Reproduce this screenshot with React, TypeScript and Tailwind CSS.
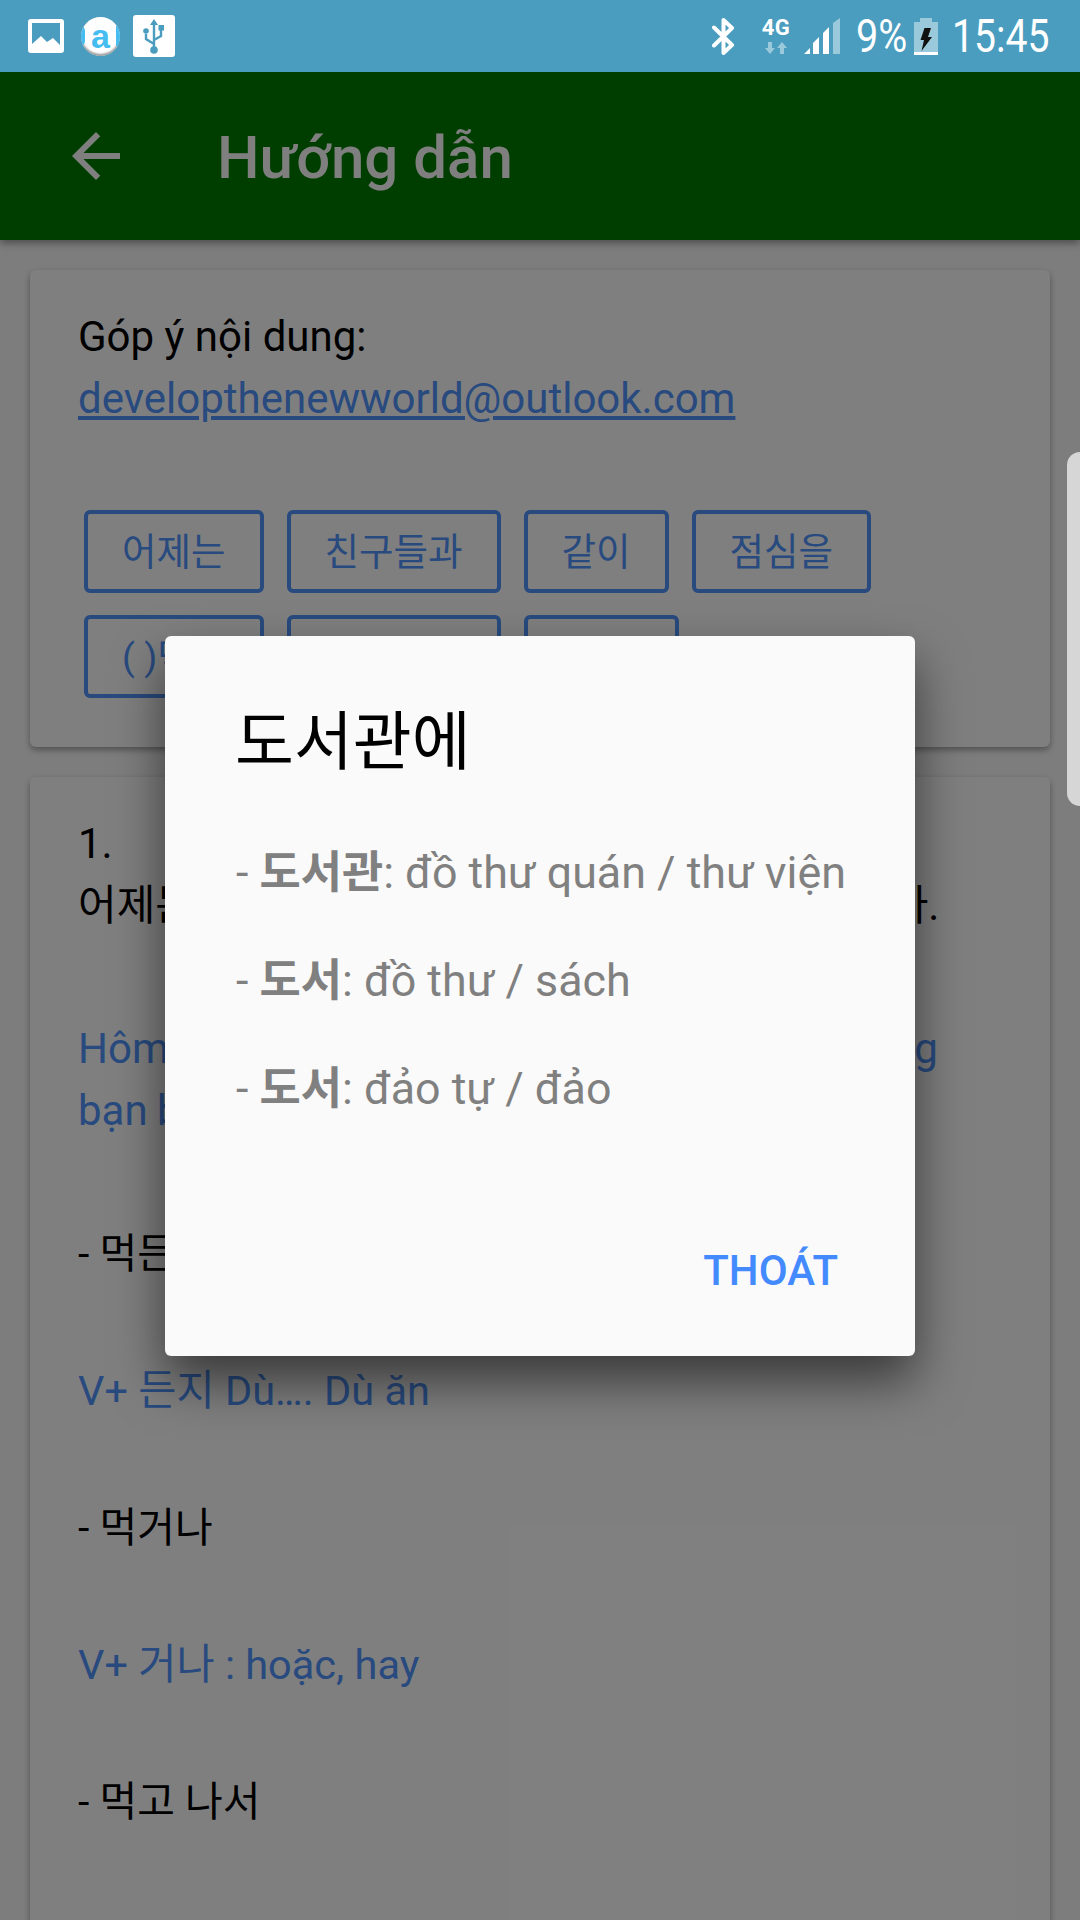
const sans = "font-['Roboto','Noto_Sans_CJK_KR',sans-serif]";

function ImageIcon() {
  return (
    <svg viewBox="0 0 36 34" className="h-[34px] w-[36px]">
      <rect width="36" height="34" rx="3" fill="#fff" />
      <path d="M4 4h28v22l-7-7-6 4-6-6-9 8z" fill="#4a9dbf" />
    </svg>
  );
}

function AppIcon() {
  return (
    <div className="relative flex h-[39px] w-[39px] items-center justify-center overflow-hidden rounded-full bg-white shadow-[inset_0_-2px_2px_#9a9a9a]">
      <span className="font-['Liberation_Sans',sans-serif] text-[34px] leading-none font-bold text-[#45bdf0]">a</span>
      <span className="absolute top-[8px] left-[-2px] h-[22px] w-[6px] rounded-r-full bg-[#45bdf0]" />
      <span className="absolute top-[9px] right-0 h-[20px] w-[4px] bg-[#45bdf0]" />
    </div>
  );
}

function UsbIcon() {
  return (
    <svg viewBox="0 0 42 42" className="h-[42px] w-[42px]">
      <rect width="42" height="42" rx="3" fill="#fff" />
      <g fill="#4a9dbf" stroke="#4a9dbf">
        <path d="M21 8v27M21 29l-8-5v-5M21 25l7-4v-6" fill="none" strokeWidth="2.4" />
        <path d="M21 4l4 6h-8z" strokeWidth="0" />
        <circle cx="13" cy="16" r="2.8" strokeWidth="0" />
        <rect x="25.5" y="10" width="5.5" height="5.5" strokeWidth="0" />
        <circle cx="21" cy="35" r="3.8" strokeWidth="0" />
      </g>
    </svg>
  );
}

function Bluetooth() {
  return (
    <svg viewBox="0 0 23 37" className="h-[37px] w-[23px]">
      <path d="M2 9.5l18 17.5-8.5 8V2l8.5 8L2 27.5" fill="none" stroke="#fff" strokeWidth="4" strokeLinejoin="round" strokeLinecap="round" />
    </svg>
  );
}

function NetworkType() {
  return (
    <div className="flex w-[28px] flex-col items-center">
      <span className="font-['Roboto',sans-serif] text-[22px] leading-[18px] font-bold tracking-[0.5px] whitespace-nowrap text-white">4G</span>
      <svg viewBox="0 0 22 12" className="mt-[5px] h-[12px] w-[22px]">
        <path d="M3 0h4v6h3l-5 6-5-6h3zM15 12h4V6h3l-5-6-5 6h3z" fill="#fff" opacity="0.45" />
      </svg>
    </div>
  );
}

function Signal() {
  return (
    <svg viewBox="0 0 36 36" className="h-[36px] w-[36px]">
      <path d="M0 36l6-6v6zM9 36V25l6-6v17zM19 36V15l6-6v27z" fill="#fff" />
      <path d="M29 36V5l7-5v36z" fill="#fff" opacity="0.45" />
    </svg>
  );
}

function Battery() {
  return (
    <svg viewBox="0 0 24 37" className="h-[37px] w-[24px]">
      <path d="M6 0h12v4h6v33H0V4h6z" fill="#fff" opacity="0.45" />
      <rect y="34" width="24" height="3" fill="#fff" />
      <path d="M10.5 10h6.5l-3 9h4L7.5 33l2.5-11H6.5z" fill="#111" />
    </svg>
  );
}

function BackArrow() {
  return (
    <svg viewBox="0 0 24 24" className="h-[72px] w-[72px]" fill="#fff">
      <path d="M20 11H7.83l5.59-5.59L12 4l-8 8 8 8 1.41-1.41L7.83 13H20v-2z" />
    </svg>
  );
}

function StatusBar() {
  return (
    <div className="relative z-20 flex h-[72px] items-center justify-between bg-[#4a9dbf] pr-[32px] pl-[28px]">
      <div className="flex items-center gap-[13px]">
        <ImageIcon />
        <div className="ml-[4px]">
          <AppIcon />
        </div>
        <UsbIcon />
      </div>
      <div className={`flex items-center text-white ${sans}`}>
        <Bluetooth />
        <div className="ml-[27px]">
          <NetworkType />
        </div>
        <div className="ml-[14px]">
          <Signal />
        </div>
        <span className="ml-[16px] w-[48px] origin-left scale-x-[0.86] text-[46px] leading-none whitespace-nowrap">9%</span>
        <div className="ml-[10px]">
          <Battery />
        </div>
        <span className="ml-[14px] w-[96px] origin-left scale-x-[0.85] text-[46px] leading-none whitespace-nowrap">15:45</span>
      </div>
    </div>
  );
}

function WordButton({ label }: { label: string }) {
  return (
    <div className="flex h-[83px] items-center rounded-[6px] border-[4px] border-[#5094fc] px-[34px] text-[37.5px] whitespace-nowrap text-[#5094fc]">
      {label}
    </div>
  );
}

function Card({ children }: { children: React.ReactNode }) {
  return <div className="rounded-[6px] bg-white shadow-[0_3px_6px_rgba(0,0,0,0.35)]">{children}</div>;
}

function Line({ children, blue, className = "" }: { children: React.ReactNode; blue?: boolean; className?: string }) {
  return <p className={`whitespace-nowrap ${blue ? "text-[#5094fc]" : "text-black"} ${className}`}>{children}</p>;
}

function DialogRow({ word, text }: { word: string; text: string }) {
  return (
    <p className="h-[108px] whitespace-nowrap">
      - <b className="font-bold">{word}</b>: {text}
    </p>
  );
}

function Dialog() {
  return (
    <div className="flex h-[720px] w-[750px] flex-col rounded-[6px] bg-[#fafafa] pt-[72px] pr-[77px] pl-[70px] shadow-[0_25px_50px_rgba(0,0,0,0.55)]">
      <h2 className="text-[64px] leading-[70px] font-normal text-black">도서관에</h2>
      <div className="mt-[41px] pl-[1px] text-[44.8px] leading-[108px] text-[#808080]">
        <DialogRow word="도서관" text="đồ thư quán / thư viện" />
        <DialogRow word="도서" text="đồ thư / sách" />
        <DialogRow word="도서" text="đảo tự / đảo" />
      </div>
      <div className="mt-[98px] text-right text-[42px] leading-[60px] font-medium text-[#448aff]">THOÁT</div>
    </div>
  );
}

export default function App() {
  return (
    <div className={`relative h-[1920px] w-[1080px] overflow-hidden bg-[#fafafa] ${sans}`}>
      <StatusBar />

      <header className="relative flex h-[168px] items-center bg-[#007c00] pl-[60px] text-white shadow-[0_3px_8px_rgba(0,0,0,0.4)]">
        <BackArrow />
        <h1 className="mt-[3px] ml-[85px] text-[60px] font-medium">Hướng dẫn</h1>
      </header>

      <main className="flex flex-col gap-[30px] px-[30px] pt-[30px] text-[42px] leading-[62px]">
        <Card>
          <div className="h-[477px] px-[48px] pt-[36px]">
            <p className="text-black">Góp ý nội dung:</p>
            <a className="text-[#5094fc] underline">developthenewworld@outlook.com</a>
            <div className="mt-[80px] flex flex-wrap gap-x-[23px] gap-y-[22px] pl-[6px]">
              <WordButton label="어제는" />
              <WordButton label="친구들과" />
              <WordButton label="같이" />
              <WordButton label="점심을" />
              <WordButton label="( )먹고" />
              <WordButton label="도서관에" />
              <WordButton label="갔다." />
            </div>
          </div>
        </Card>
        <Card>
          <div className="flex h-[1200px] flex-col gap-[75px] px-[48px] pt-[36px]">
            <Line className="mb-[6px] [word-spacing:2.5px]">
              1.
              <br />
              어제는 친구들과 같이 점심을 먹고 도서관에 갔다.
            </Line>
            <Line blue className="mb-[6px] [word-spacing:-1px]">
              Hôm qua sau khi ăn trưa xong mình đã đi cùng
              <br />
              bạn bè đến thư viện.
            </Line>
            <Line className="text-[41px]">- 먹든지</Line>
            <Line blue className="text-[41.5px]">V+ 든지 Dù…. Dù ăn</Line>
            <Line className="text-[41px]">- 먹거나</Line>
            <Line blue className="text-[41.5px]">V+ 거나 : hoặc, hay</Line>
            <Line className="text-[41px]">- 먹고 나서</Line>
          </div>
        </Card>
      </main>

      <div className="absolute inset-x-0 top-[72px] bottom-0 z-10 flex items-center justify-center bg-black/50">
        <Dialog />
      </div>

      <div className="absolute top-[452px] right-0 z-10 h-[354px] w-[13px] rounded-l-[13px] bg-[#d6d6d6]" />
    </div>
  );
}
